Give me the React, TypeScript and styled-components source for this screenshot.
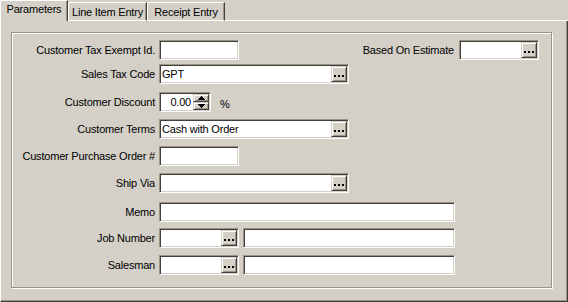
import styled, { createGlobalStyle } from 'styled-components';

const FACE = '#D4D0C8';
const LIGHT = '#FFFFFF';
const SHADOW = '#9C9482';
const DARK = '#404040';

const GlobalStyle = createGlobalStyle`
  html, body {
    margin: 0;
    padding: 0;
    background: ${FACE};
  }
  body {
    font-family: "Liberation Sans", Arial, sans-serif;
    font-size: 11px;
    letter-spacing: -0.2px;
    color: #000;
  }
`;

const Window = styled.div`
  width: 568px;
  height: 302px;
  display: flex;
  flex-direction: column;
  background: ${FACE};
`;

const TabStrip = styled.div`
  display: flex;
  align-items: flex-end;
  height: 21px;
  flex: none;
`;

const Tab = styled.div<{ $active?: boolean; $w: number }>`
  box-sizing: border-box;
  width: ${(p) => p.$w}px;
  height: ${(p) => (p.$active ? 21 : 19)}px;
  flex: none;
  border-top: 1px solid ${LIGHT};
  border-left: 1px solid ${LIGHT};
  border-right: 1px solid ${DARK};
  border-bottom: ${(p) => (p.$active ? 'none' : `1px solid ${LIGHT}`)};
  border-top-left-radius: 2px;
  box-shadow: inset -1px 0 0 ${SHADOW};
  display: flex;
  justify-content: center;
  padding-top: ${(p) => (p.$active ? 2 : 3)}px;
  line-height: 13px;
  white-space: nowrap;
`;

const TabFiller = styled.div`
  flex: 1;
  border-bottom: 1px solid ${LIGHT};
`;

const Panel = styled.div`
  flex: 1;
  display: flex;
  box-sizing: border-box;
  border-left: 1px solid ${LIGHT};
  border-right: 1px solid ${DARK};
  border-bottom: 1px solid ${DARK};
  box-shadow: inset -1px -1px 0 ${SHADOW};
  padding: 11px 15px 13px 10px;
`;

const GroupBox = styled.div`
  flex: 1;
  box-sizing: border-box;
  border: 1px solid ${SHADOW};
  box-shadow: inset 1px 1px 0 ${LIGHT}, 1px 1px 0 ${LIGHT};
  padding: 7px 12px 0 0;
  display: flex;
  flex-direction: column;
`;

const Row = styled.div<{ $gap: number }>`
  display: flex;
  align-items: center;
  height: 20px;
  margin-top: ${(p) => p.$gap}px;
`;

const Label = styled.label`
  width: 143px;
  flex: none;
  margin-right: 4px;
  text-align: right;
  white-space: nowrap;
`;

const SideLabel = styled.label`
  margin-left: auto;
  margin-right: 5px;
  white-space: nowrap;
`;

const Field = styled.div<{ $w: number; $gapLeft?: number }>`
  box-sizing: border-box;
  width: ${(p) => p.$w}px;
  height: 20px;
  flex: none;
  margin-left: ${(p) => p.$gapLeft ?? 0}px;
  display: flex;
  background: #fff;
  border: 1px solid;
  border-color: ${SHADOW} ${LIGHT} ${LIGHT} ${SHADOW};
  padding: 1px;
  box-shadow: inset 1px 1px 0 ${DARK}, inset -1px -1px 0 ${FACE};
`;

const FieldText = styled.div<{ $right?: boolean }>`
  flex: 1;
  overflow: hidden;
  white-space: nowrap;
  line-height: 16px;
  padding: 0 ${(p) => (p.$right ? '2px' : '0')} 0 ${(p) => (p.$right ? '0' : '1px')};
  text-align: ${(p) => (p.$right ? 'right' : 'left')};
`;

const RaisedButton = styled.div`
  box-sizing: border-box;
  background: ${FACE};
  border: 1px solid;
  border-color: ${FACE} ${DARK} ${DARK} ${FACE};
  box-shadow: inset 1px 1px 0 ${LIGHT}, inset -1px -1px 0 ${SHADOW};
  display: flex;
  align-items: center;
  justify-content: center;
`;

const BrowseButton = styled(RaisedButton)`
  width: 16px;
  flex: none;
  gap: 2px;
  padding-top: 3px;
`;

const Dot = styled.span`
  width: 2px;
  height: 2px;
  background: #000;
`;

const SpinColumn = styled.div`
  width: 16px;
  flex: none;
  display: flex;
  flex-direction: column;
`;

const SpinButton = styled(RaisedButton)`
  flex: 1;
`;

const Unit = styled.span`
  margin-left: 9px;
  padding-top: 3px;
`;

const Arrow = ({ down }: { down?: boolean }) => (
  <svg width="7" height="4" viewBox="0 0 7 4" shapeRendering="crispEdges"
    style={{ transform: down ? 'scaleY(-1)' : undefined }}>
    <rect x="3" y="0" width="1" height="1" fill="#000" />
    <rect x="2" y="1" width="3" height="1" fill="#000" />
    <rect x="1" y="2" width="5" height="1" fill="#000" />
    <rect x="0" y="3" width="7" height="1" fill="#000" />
  </svg>
);

const Browse = () => (
  <BrowseButton>
    <Dot />
    <Dot />
    <Dot />
  </BrowseButton>
);

type LookupProps = { w: number; value?: string };

const LookupField = ({ w, value }: LookupProps) => (
  <Field $w={w}>
    <FieldText>{value}</FieldText>
    <Browse />
  </Field>
);

export default function App() {
  return (
    <Window>
      <GlobalStyle />
      <TabStrip>
        <Tab $active $w={68}>Parameters</Tab>
        <Tab $w={79}>Line Item Entry</Tab>
        <Tab $w={78}>Receipt Entry</Tab>
        <TabFiller />
      </TabStrip>
      <Panel>
        <GroupBox>
          <Row $gap={0}>
            <Label>Customer Tax Exempt Id.</Label>
            <Field $w={80} />
            <SideLabel>Based On Estimate</SideLabel>
            <LookupField w={80} />
          </Row>
          <Row $gap={4}>
            <Label>Sales Tax Code</Label>
            <LookupField w={190} value="GPT" />
          </Row>
          <Row $gap={8}>
            <Label>Customer Discount</Label>
            <Field $w={52}>
              <FieldText $right>0.00</FieldText>
              <SpinColumn>
                <SpinButton><Arrow /></SpinButton>
                <SpinButton><Arrow down /></SpinButton>
              </SpinColumn>
            </Field>
            <Unit>%</Unit>
          </Row>
          <Row $gap={7}>
            <Label>Customer Terms</Label>
            <LookupField w={190} value="Cash with Order" />
          </Row>
          <Row $gap={7}>
            <Label>Customer Purchase Order #</Label>
            <Field $w={80} />
          </Row>
          <Row $gap={7}>
            <Label>Ship Via</Label>
            <LookupField w={190} />
          </Row>
          <Row $gap={9}>
            <Label>Memo</Label>
            <Field $w={296} />
          </Row>
          <Row $gap={6}>
            <Label>Job Number</Label>
            <LookupField w={80} />
            <Field $w={212} $gapLeft={4} />
          </Row>
          <Row $gap={7}>
            <Label>Salesman</Label>
            <LookupField w={80} />
            <Field $w={212} $gapLeft={4} />
          </Row>
        </GroupBox>
      </Panel>
    </Window>
  );
}
